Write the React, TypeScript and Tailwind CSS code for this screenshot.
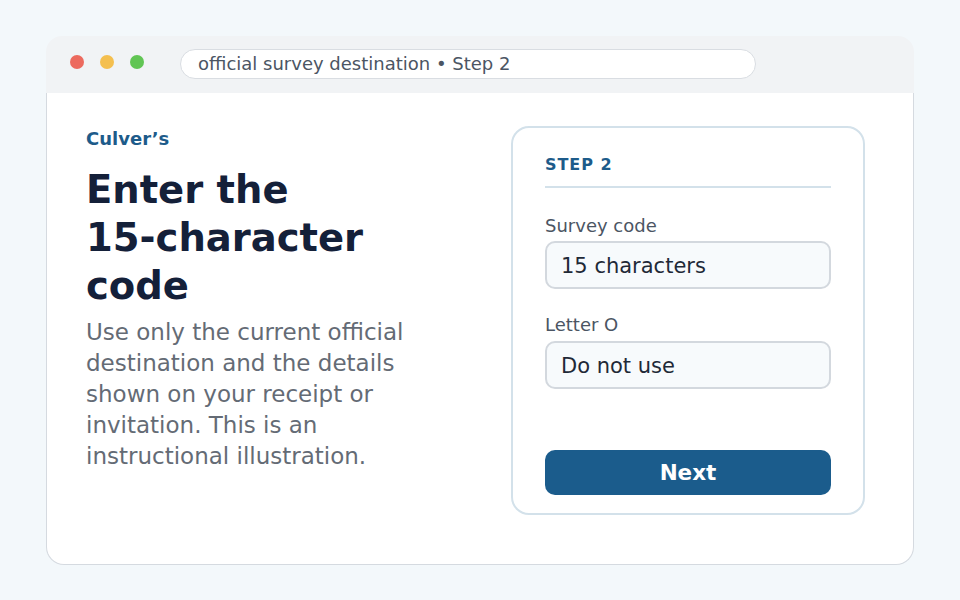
export default function App() {
  const font = { fontFamily: '"DejaVu Sans", "Liberation Sans", sans-serif' };
  return (
    <div className="w-[960px] h-[600px] bg-[#f3f8fb] pt-[36px] pl-[46px]" style={font}>
      <div className="w-[868px] flex flex-col">
        <div className="h-[57px] bg-[#f1f3f5] rounded-t-[16px] flex items-start pt-[13px] pl-[24px]">
          <div className="flex gap-[16px] items-center mt-[6px]">
            <span className="w-[14px] h-[14px] rounded-full bg-[#ec6a5e]" />
            <span className="w-[14px] h-[14px] rounded-full bg-[#f4bf4f]" />
            <span className="w-[14px] h-[14px] rounded-full bg-[#61c554]" />
          </div>
          <div className="ml-[36px] w-[576px] h-[30px] rounded-full bg-white border border-[#d9dde2] flex items-center pl-[17px] pb-[1px] text-[18px] text-[#4b5563]">
            official survey destination • Step 2
          </div>
        </div>
        <div className="h-[472px] bg-white border border-t-0 border-[#d5dae0] rounded-b-[18px] flex justify-between pl-[39px] pr-[48px] pt-[33px]">
          <div className="w-[350px] flex flex-col">
            <div className="text-[18px] leading-[24px] font-bold text-[#1d5b8a] mt-[1px]">Culver’s</div>
            <h1 className="mt-[15px] text-[38.5px] leading-[48px] font-bold text-[#142039]">
              Enter the <span className="whitespace-nowrap">15-character</span> code
            </h1>
            <p className="mt-[7px] text-[23px] leading-[31px] text-[#646b75]">
              Use only the current official destination and the details shown on your receipt or invitation. This is an instructional illustration.
            </p>
          </div>
          <div className="w-[354px] h-[389px] border-2 border-[#d3e1ea] rounded-[18px] px-[32px] pt-[27px] flex flex-col">
            <div className="pb-[11px] border-b-2 border-[#d3e1ea] text-[16px] leading-[20px] font-bold tracking-[0.06em] text-[#1d5b8a]">
              STEP 2
            </div>
            <div className="mt-[26px] text-[18px] leading-[24px] text-[#4b5563]">Survey code</div>
            <div className="mt-[3px] h-[48px] shrink-0 rounded-[10px] border-2 border-[#d3d8de] bg-[#f7fafc] flex items-center pl-[14px] pt-[3px] text-[21px] text-[#1f2937]">
              15 characters
            </div>
            <div className="mt-[24px] text-[18px] leading-[24px] text-[#4b5563]">Letter O</div>
            <div className="mt-[4px] h-[48px] shrink-0 rounded-[10px] border-2 border-[#d3d8de] bg-[#f7fafc] flex items-center pl-[14px] pt-[3px] text-[21px] text-[#1f2937]">
              Do not use
            </div>
            <button className="mt-[61px] h-[45px] shrink-0 rounded-[10px] bg-[#1b5c8c] text-white text-[21.5px] font-bold flex items-center justify-center pt-[1px]">
              Next
            </button>
          </div>
        </div>
      </div>
    </div>
  );
}
